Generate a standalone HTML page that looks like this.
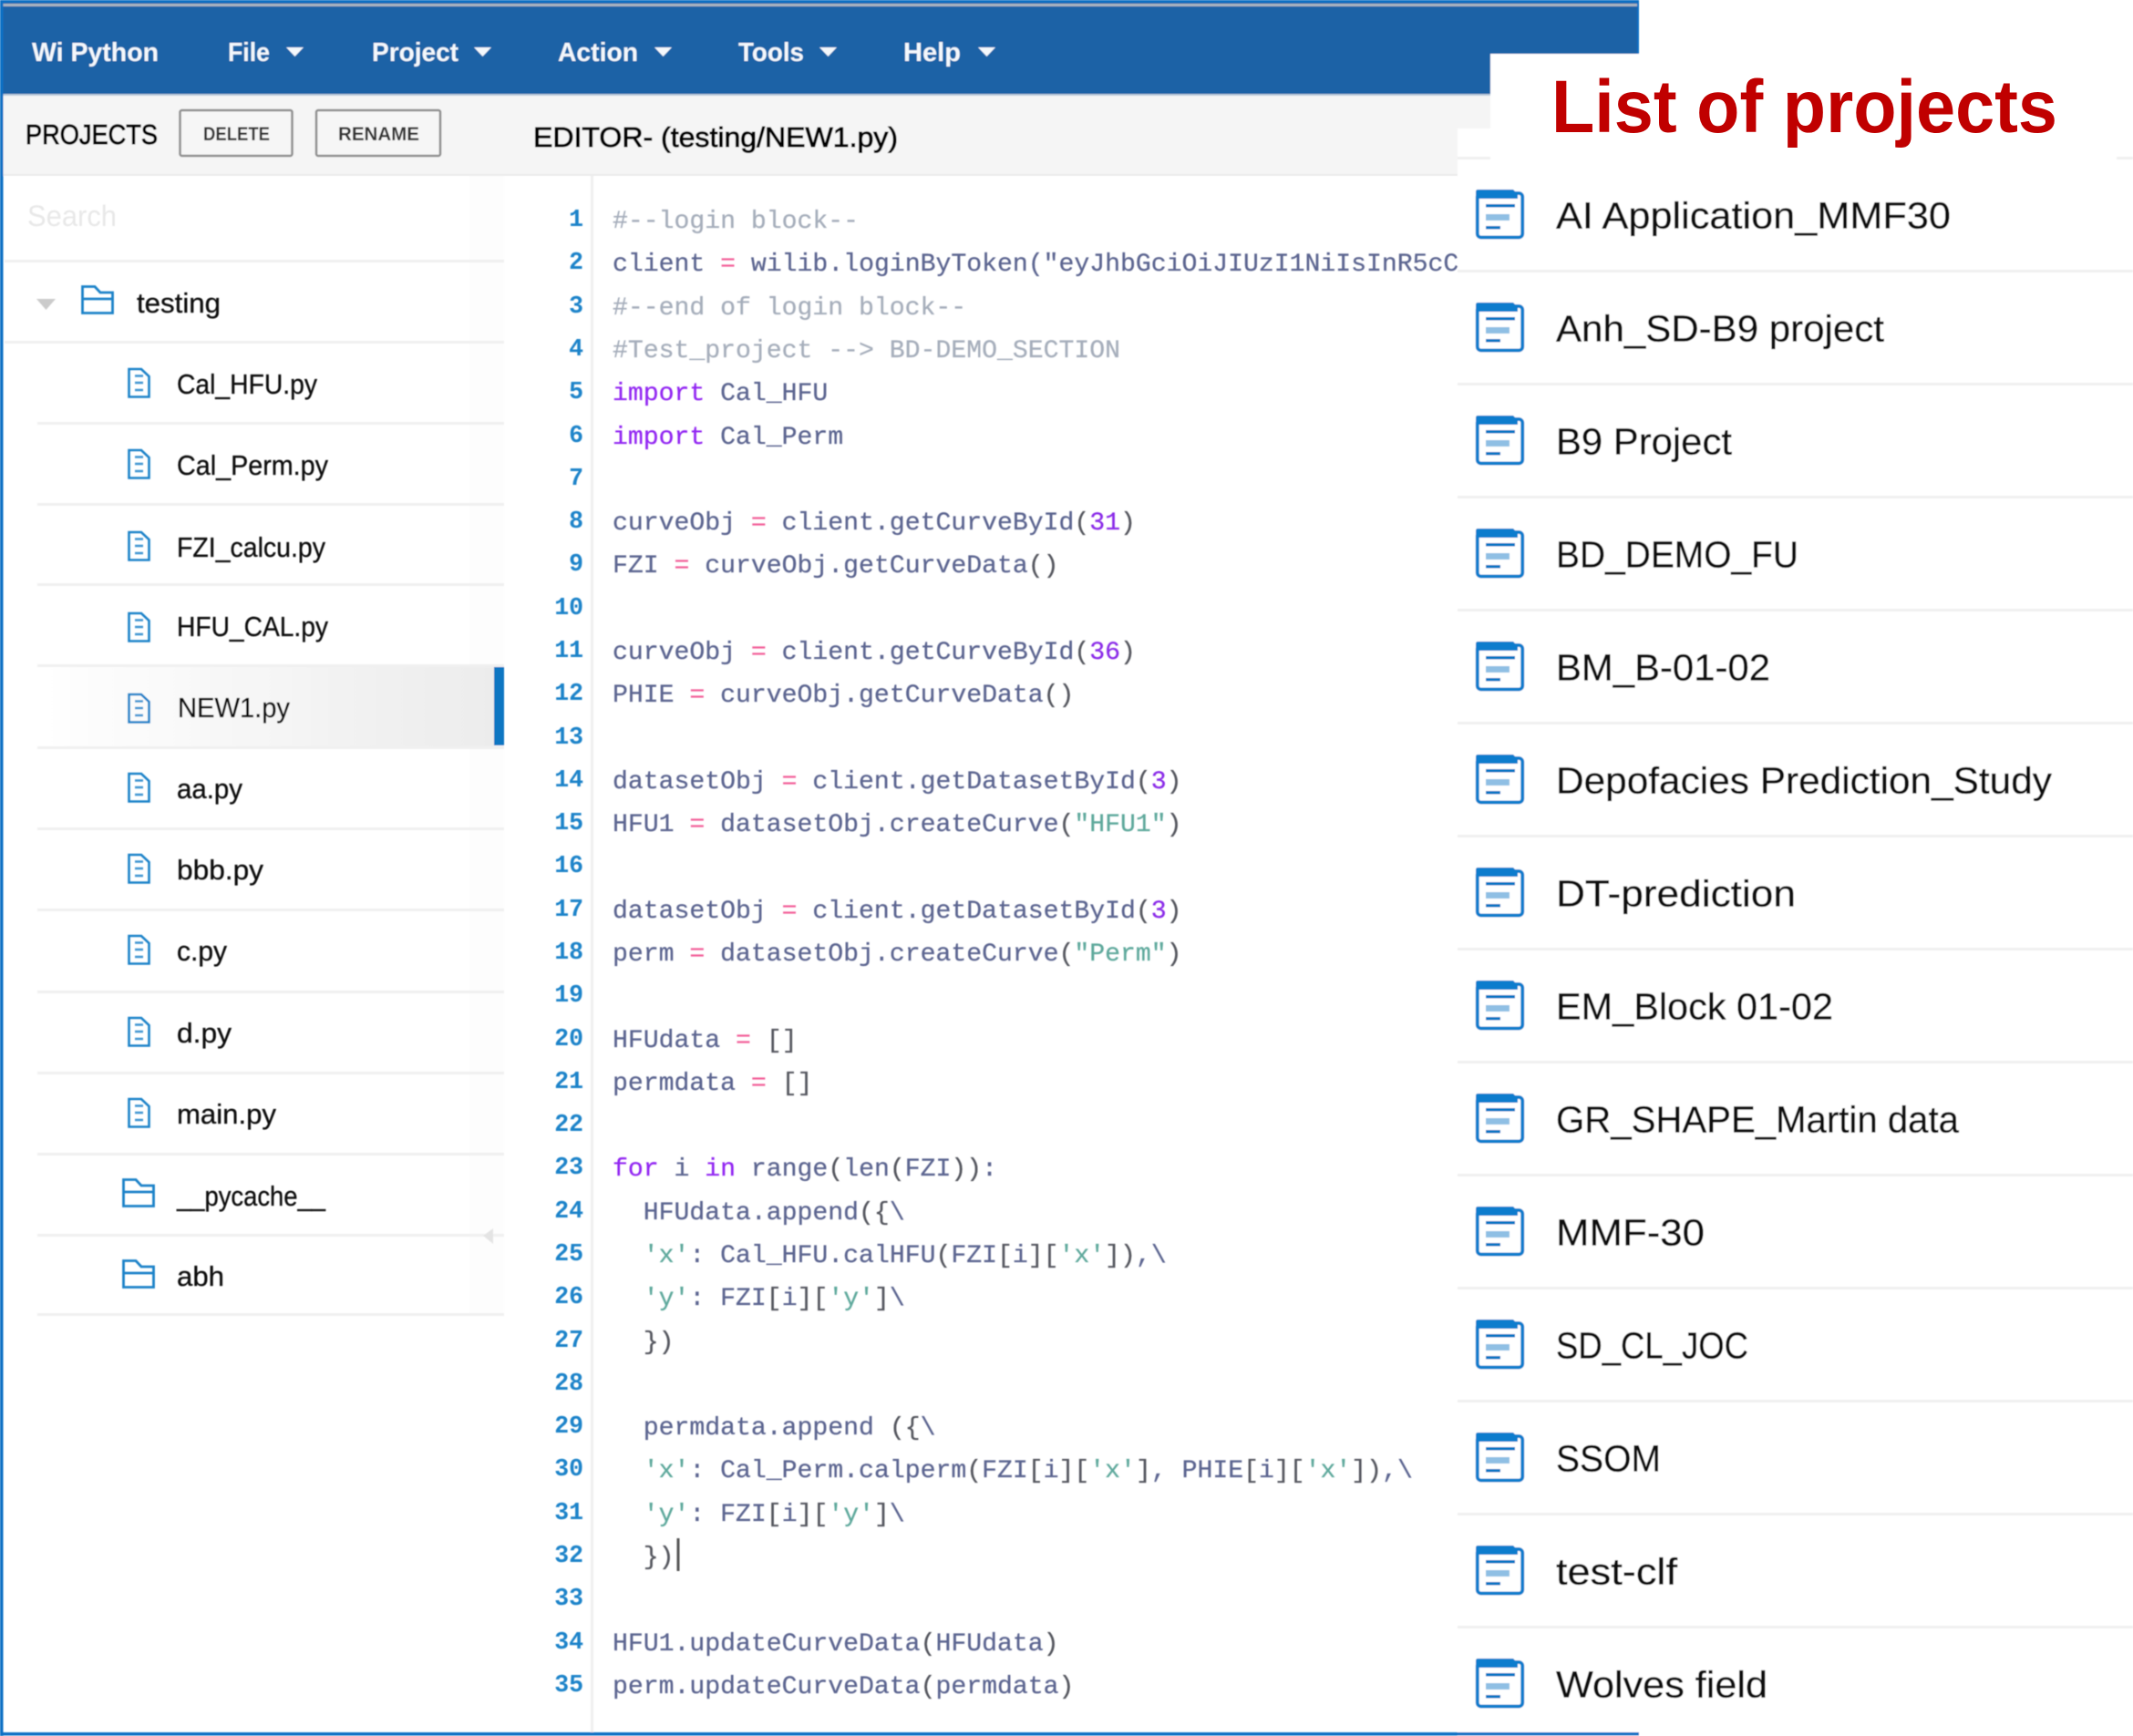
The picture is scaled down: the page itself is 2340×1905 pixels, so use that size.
<!DOCTYPE html>
<html lang="en">
<head>
<meta charset="utf-8">
<title>Wi Python</title>
<style>
html,body{margin:0;padding:0;background:#fff;width:2340px;height:1905px;overflow:hidden}
svg{display:block;position:absolute;left:0;top:0}
text{white-space:pre}
.sans{font-family:"Liberation Sans",sans-serif}
.nav{font-family:"Liberation Sans",sans-serif;font-weight:700;font-size:29px;fill:#f4f8fc}
.hd{font-family:"Liberation Sans",sans-serif;font-size:31px;fill:#000;stroke:#000;stroke-width:.9px}
.btn{font-family:"Liberation Sans",sans-serif;font-weight:700;font-size:21px;fill:#333}
.it{font-family:"Liberation Sans",sans-serif;font-size:31px;fill:#111;stroke:#111;stroke-width:.3px}
.pr{font-family:"Liberation Sans",sans-serif;font-size:41px;fill:#111;stroke:#111;stroke-width:.3px}
.ln{font-family:"Liberation Mono",monospace;font-weight:700;font-size:26.5px;fill:#1f83c9;text-anchor:end}
.c{font-family:"Liberation Mono",monospace;font-size:28.13px;fill:#5c6590;stroke:#5c6590;stroke-width:.25px}
.m{fill:#a6aebb;stroke:#a6aebb}
.k{fill:#9226f2;stroke:#9226f2}
.o{fill:#f2609a;stroke:#f2609a}
.n{fill:#8a2be8;stroke:#8a2be8}
.s{fill:#5fa99c;stroke:#5fa99c}
.b{fill:#55575e;stroke:#55575e}
</style>
</head>
<body>
<svg width="2340" height="1905" viewBox="0 0 2340 1905" xmlns="http://www.w3.org/2000/svg">
<defs>
<filter id="bl" x="0" y="0" width="100%" height="100%"><feGaussianBlur stdDeviation="0.55"/></filter>
<linearGradient id="act" x1="0" x2="1" y1="0" y2="0"><stop offset="0" stop-color="#fff"/><stop offset="1" stop-color="#ececec"/></linearGradient>
<g id="file" fill="none" stroke="#1f83c9"><path d="M1.5 2H15L23.5 10V32.5H1.5Z" stroke-width="2.6"/><path d="M8 9.5H17M8 17H17M8 25H17" stroke-width="2.4" opacity=".85"/></g>
<g id="fold" fill="none" stroke="#1f83c9" stroke-width="2.8"><path d="M1.5 1.5H15L21 8H34.5V30.5H1.5Z"/><path d="M1.5 15H34.5"/></g>
<g id="proj"><rect x="1.75" y="4" width="49.5" height="48.5" rx="4" fill="#fff" stroke="#0f7bcc" stroke-width="3.8"/><path d="M0 10V2.500Q0 0 2.500 0H41L46 5V10Z" fill="#0c7ccd"/><rect x="11" y="16" width="32" height="3.5" fill="#0f76c4"/><rect x="11" y="27" width="26" height="7" fill="#8fbfe4"/><rect x="11" y="40" width="16" height="3.5" fill="#0f76c4"/></g>
</defs>

<g filter="url(#bl)">
<!-- app chrome -->
<rect x="0" y="0" width="1798" height="104" fill="#1a62a6"/>
<rect x="0" y="0" width="1798" height="3" fill="#0a70c4"/>
<rect x="3" y="4" width="1794" height="3" fill="#a9b4c1"/>
<rect x="3" y="103" width="1794" height="2" fill="#b9c9d9"/>
<rect x="3" y="105" width="1794" height="87" fill="#f5f5f5"/>
<rect x="3" y="191" width="1794" height="2" fill="#ebebeb"/>
<rect x="0" y="0" width="3.5" height="1905" fill="#0a70c4"/>
<rect x="1796" y="0" width="2" height="104" fill="#0a70c4"/>

<!-- nav -->
<text class="nav" x="35" y="67" textLength="139" lengthAdjust="spacingAndGlyphs">Wi Python</text>
<text class="nav" x="250" y="67" textLength="46" lengthAdjust="spacingAndGlyphs">File</text>
<path d="M314 52H333L323.500 62Z" fill="#f4f8fc"/>
<text class="nav" x="408" y="67" textLength="95" lengthAdjust="spacingAndGlyphs">Project</text>
<path d="M520 52H539L529.500 62Z" fill="#f4f8fc"/>
<text class="nav" x="612" y="67" textLength="88" lengthAdjust="spacingAndGlyphs">Action</text>
<path d="M718 52H737L727.500 62Z" fill="#f4f8fc"/>
<text class="nav" x="810" y="67" textLength="72" lengthAdjust="spacingAndGlyphs">Tools</text>
<path d="M899 52H918L908.500 62Z" fill="#f4f8fc"/>
<text class="nav" x="991" y="67" textLength="63" lengthAdjust="spacingAndGlyphs">Help</text>
<path d="M1073 52H1092L1082.500 62Z" fill="#f4f8fc"/>

<!-- toolbar -->
<text class="hd" x="28" y="158" textLength="145" lengthAdjust="spacingAndGlyphs">PROJECTS</text>
<rect x="197.500" y="121" width="123" height="50" rx="2" fill="#f6f6f6" stroke="#8f8f8f" stroke-width="2.5"/>
<text class="btn" x="223" y="154" textLength="73" lengthAdjust="spacingAndGlyphs">DELETE</text>
<rect x="347" y="121" width="136" height="50" rx="2" fill="#f6f6f6" stroke="#8f8f8f" stroke-width="2.5"/>
<text class="btn" x="371" y="154" textLength="89" lengthAdjust="spacingAndGlyphs">RENAME</text>
<text class="hd" x="585" y="161" textLength="400" lengthAdjust="spacingAndGlyphs">EDITOR- (testing/NEW1.py)</text>

<!-- sidebar -->
<text class="sans" x="30" y="248" font-size="32" fill="#e8e8e8" textLength="98" lengthAdjust="spacingAndGlyphs">Search</text>
<rect x="515" y="193" width="38" height="1250" fill="#fdfdfd"/>
<rect x="41" y="732" width="501" height="87" fill="url(#act)"/>
<rect x="542" y="732" width="11" height="86" fill="#0f76c2"/>
<g fill="#f0f0f0">
<rect x="5" y="285" width="548" height="3"/>
<rect x="5" y="374" width="548" height="3"/>
<rect x="41" y="463" width="512" height="3"/>
<rect x="41" y="552" width="512" height="3"/>
<rect x="41" y="640" width="512" height="3"/>
<rect x="41" y="729" width="512" height="3"/>
<rect x="41" y="819" width="512" height="3"/>
<rect x="41" y="908" width="512" height="3"/>
<rect x="41" y="997" width="512" height="3"/>
<rect x="41" y="1087" width="512" height="3"/>
<rect x="41" y="1176" width="512" height="3"/>
<rect x="41" y="1265" width="512" height="3"/>
<rect x="41" y="1354" width="512" height="3"/>
<rect x="41" y="1441" width="512" height="3"/>
</g>
<path d="M530 1356L541 1348V1365Z" fill="#e4e4e4"/>

<path d="M40 328H61L50.500 340Z" fill="#cbcbcb"/>
<use href="#fold" x="89" y="313"/>
<text class="it" x="150" y="343" textLength="92" lengthAdjust="spacingAndGlyphs">testing</text>

<use href="#file" x="140" y="403"/><text class="it" x="194" y="432" textLength="154" lengthAdjust="spacingAndGlyphs">Cal_HFU.py</text>
<use href="#file" x="140" y="492"/><text class="it" x="194" y="521" textLength="166" lengthAdjust="spacingAndGlyphs">Cal_Perm.py</text>
<use href="#file" x="140" y="582"/><text class="it" x="194" y="611" textLength="163" lengthAdjust="spacingAndGlyphs">FZI_calcu.py</text>
<use href="#file" x="140" y="671"/><text class="it" x="194" y="698" textLength="166" lengthAdjust="spacingAndGlyphs">HFU_CAL.py</text>
<use href="#file" x="140" y="760"/><text class="it" x="195" y="787" textLength="123" lengthAdjust="spacingAndGlyphs">NEW1.py</text>
<use href="#file" x="140" y="847"/><text class="it" x="194" y="876" textLength="72" lengthAdjust="spacingAndGlyphs">aa.py</text>
<use href="#file" x="140" y="936"/><text class="it" x="194" y="965" textLength="95" lengthAdjust="spacingAndGlyphs">bbb.py</text>
<use href="#file" x="140" y="1025"/><text class="it" x="194" y="1054" textLength="55" lengthAdjust="spacingAndGlyphs">c.py</text>
<use href="#file" x="140" y="1115"/><text class="it" x="194" y="1144" textLength="60" lengthAdjust="spacingAndGlyphs">d.py</text>
<use href="#file" x="140" y="1204"/><text class="it" x="194" y="1233" textLength="109" lengthAdjust="spacingAndGlyphs">main.py</text>
<use href="#fold" x="134" y="1293"/><text class="it" x="194" y="1323" textLength="163" lengthAdjust="spacingAndGlyphs">__pycache__</text>
<use href="#fold" x="134" y="1382"/><text class="it" x="194" y="1411" textLength="52" lengthAdjust="spacingAndGlyphs">abh</text>

<!-- gutter -->
<rect x="648" y="193" width="3" height="1708" fill="#efefef"/>

<text class="ln" x="640" y="248">1</text>
<text class="ln" x="640" y="295">2</text>
<text class="ln" x="640" y="343">3</text>
<text class="ln" x="640" y="390">4</text>
<text class="ln" x="640" y="437">5</text>
<text class="ln" x="640" y="485">6</text>
<text class="ln" x="640" y="532">7</text>
<text class="ln" x="640" y="579">8</text>
<text class="ln" x="640" y="626">9</text>
<text class="ln" x="640" y="674">10</text>
<text class="ln" x="640" y="721">11</text>
<text class="ln" x="640" y="768">12</text>
<text class="ln" x="640" y="816">13</text>
<text class="ln" x="640" y="863">14</text>
<text class="ln" x="640" y="910">15</text>
<text class="ln" x="640" y="957">16</text>
<text class="ln" x="640" y="1005">17</text>
<text class="ln" x="640" y="1052">18</text>
<text class="ln" x="640" y="1099">19</text>
<text class="ln" x="640" y="1147">20</text>
<text class="ln" x="640" y="1194">21</text>
<text class="ln" x="640" y="1241">22</text>
<text class="ln" x="640" y="1288">23</text>
<text class="ln" x="640" y="1336">24</text>
<text class="ln" x="640" y="1383">25</text>
<text class="ln" x="640" y="1430">26</text>
<text class="ln" x="640" y="1478">27</text>
<text class="ln" x="640" y="1525">28</text>
<text class="ln" x="640" y="1572">29</text>
<text class="ln" x="640" y="1619">30</text>
<text class="ln" x="640" y="1667">31</text>
<text class="ln" x="640" y="1714">32</text>
<text class="ln" x="640" y="1761">33</text>
<text class="ln" x="640" y="1809">34</text>
<text class="ln" x="640" y="1856">35</text>

<!-- code -->
<text class="c m" x="672" y="250">#--login block--</text>
<text class="c" x="672" y="297">client <tspan class="o">=</tspan> wilib.loginByToken(&quot;eyJhbGciOiJIUzI1NiIsInR5cCI6IkpXVCJ9</text>
<text class="c m" x="672" y="345">#--end of login block--</text>
<text class="c m" x="672" y="392">#Test_project --&gt; BD-DEMO_SECTION</text>
<text class="c" x="672" y="439"><tspan class="k">import</tspan> Cal_HFU</text>
<text class="c" x="672" y="487"><tspan class="k">import</tspan> Cal_Perm</text>
<text class="c" x="672" y="581">curveObj <tspan class="o">=</tspan> client.getCurveById<tspan class="b">(</tspan><tspan class="n">31</tspan><tspan class="b">)</tspan></text>
<text class="c" x="672" y="628">FZI <tspan class="o">=</tspan> curveObj.getCurveData<tspan class="b">()</tspan></text>
<text class="c" x="672" y="723">curveObj <tspan class="o">=</tspan> client.getCurveById<tspan class="b">(</tspan><tspan class="n">36</tspan><tspan class="b">)</tspan></text>
<text class="c" x="672" y="770">PHIE <tspan class="o">=</tspan> curveObj.getCurveData<tspan class="b">()</tspan></text>
<text class="c" x="672" y="865">datasetObj <tspan class="o">=</tspan> client.getDatasetById<tspan class="b">(</tspan><tspan class="n">3</tspan><tspan class="b">)</tspan></text>
<text class="c" x="672" y="912">HFU1 <tspan class="o">=</tspan> datasetObj.createCurve<tspan class="b">(</tspan><tspan class="s">&quot;HFU1&quot;</tspan><tspan class="b">)</tspan></text>
<text class="c" x="672" y="1007">datasetObj <tspan class="o">=</tspan> client.getDatasetById<tspan class="b">(</tspan><tspan class="n">3</tspan><tspan class="b">)</tspan></text>
<text class="c" x="672" y="1054">perm <tspan class="o">=</tspan> datasetObj.createCurve<tspan class="b">(</tspan><tspan class="s">&quot;Perm&quot;</tspan><tspan class="b">)</tspan></text>
<text class="c" x="672" y="1149">HFUdata <tspan class="o">=</tspan> <tspan class="b">[]</tspan></text>
<text class="c" x="672" y="1196">permdata <tspan class="o">=</tspan> <tspan class="b">[]</tspan></text>
<text class="c" x="672" y="1290"><tspan class="k">for</tspan> i <tspan class="k">in</tspan> range<tspan class="b">(</tspan>len<tspan class="b">(</tspan>FZI<tspan class="b">))</tspan>:</text>
<text class="c" x="672" y="1338">  HFUdata.append<tspan class="b">({</tspan>\</text>
<text class="c" x="672" y="1385">  <tspan class="s">'x'</tspan>: Cal_HFU.calHFU<tspan class="b">(</tspan>FZI<tspan class="b">[</tspan>i<tspan class="b">][</tspan><tspan class="s">'x'</tspan><tspan class="b">])</tspan>,\</text>
<text class="c" x="672" y="1432">  <tspan class="s">'y'</tspan>: FZI<tspan class="b">[</tspan>i<tspan class="b">][</tspan><tspan class="s">'y'</tspan><tspan class="b">]</tspan>\</text>
<text class="c" x="672" y="1480">  <tspan class="b">})</tspan></text>
<text class="c" x="672" y="1574">  permdata.append <tspan class="b">({</tspan>\</text>
<text class="c" x="672" y="1621">  <tspan class="s">'x'</tspan>: Cal_Perm.calperm<tspan class="b">(</tspan>FZI<tspan class="b">[</tspan>i<tspan class="b">][</tspan><tspan class="s">'x'</tspan><tspan class="b">]</tspan>, PHIE<tspan class="b">[</tspan>i<tspan class="b">][</tspan><tspan class="s">'x'</tspan><tspan class="b">])</tspan>,\</text>
<text class="c" x="672" y="1669">  <tspan class="s">'y'</tspan>: FZI<tspan class="b">[</tspan>i<tspan class="b">][</tspan><tspan class="s">'y'</tspan><tspan class="b">]</tspan>\</text>
<text class="c" x="672" y="1716">  <tspan class="b">})</tspan></text>
<rect x="742.500" y="1688" width="3" height="36" fill="#555"/>
<text class="c" x="672" y="1811">HFU1.updateCurveData<tspan class="b">(</tspan>HFUdata<tspan class="b">)</tspan></text>
<text class="c" x="672" y="1858">perm.updateCurveData<tspan class="b">(</tspan>permdata<tspan class="b">)</tspan></text>

<!-- right overlay -->
<rect x="1635" y="59" width="705" height="85" fill="#fff"/>
<rect x="1599" y="141" width="741" height="1764" fill="#fff"/>
<rect x="1599" y="172" width="36" height="3" fill="#f0f0f0"/>
<rect x="2322" y="172" width="18" height="3" fill="#f0f0f0"/>

<!-- bottom border -->
<rect x="0" y="1901" width="1798" height="3.500" fill="#0a70c4"/>

<!-- project list -->
<g fill="#f0f0f0">
<rect x="1599" y="296" width="741" height="3"/>
<rect x="1599" y="420" width="741" height="3"/>
<rect x="1599" y="544" width="741" height="3"/>
<rect x="1599" y="668" width="741" height="3"/>
<rect x="1599" y="792" width="741" height="3"/>
<rect x="1599" y="916" width="741" height="3"/>
<rect x="1599" y="1040" width="741" height="3"/>
<rect x="1599" y="1164" width="741" height="3"/>
<rect x="1599" y="1288" width="741" height="3"/>
<rect x="1599" y="1412" width="741" height="3"/>
<rect x="1599" y="1536" width="741" height="3"/>
<rect x="1599" y="1660" width="741" height="3"/>
<rect x="1599" y="1784" width="741" height="3"/>
</g>
<use href="#proj" x="1619" y="208"/><text class="pr" x="1707" y="250.500" textLength="433" lengthAdjust="spacingAndGlyphs">AI Application_MMF30</text>
<use href="#proj" x="1619" y="332"/><text class="pr" x="1707" y="374.500" textLength="360" lengthAdjust="spacingAndGlyphs">Anh_SD-B9 project</text>
<use href="#proj" x="1619" y="456"/><text class="pr" x="1707" y="498.500" textLength="193" lengthAdjust="spacingAndGlyphs">B9 Project</text>
<use href="#proj" x="1619" y="580"/><text class="pr" x="1707" y="622.500" textLength="266" lengthAdjust="spacingAndGlyphs">BD_DEMO_FU</text>
<use href="#proj" x="1619" y="704"/><text class="pr" x="1707" y="746.500" textLength="235" lengthAdjust="spacingAndGlyphs">BM_B-01-02</text>
<use href="#proj" x="1619" y="828"/><text class="pr" x="1707" y="870.500" textLength="544" lengthAdjust="spacingAndGlyphs">Depofacies Prediction_Study</text>
<use href="#proj" x="1619" y="952"/><text class="pr" x="1707" y="994.500" textLength="263" lengthAdjust="spacingAndGlyphs">DT-prediction</text>
<use href="#proj" x="1619" y="1076"/><text class="pr" x="1707" y="1118.500" textLength="304" lengthAdjust="spacingAndGlyphs">EM_Block 01-02</text>
<use href="#proj" x="1619" y="1200"/><text class="pr" x="1707" y="1242.500" textLength="442" lengthAdjust="spacingAndGlyphs">GR_SHAPE_Martin data</text>
<use href="#proj" x="1619" y="1324"/><text class="pr" x="1707" y="1366.500" textLength="163" lengthAdjust="spacingAndGlyphs">MMF-30</text>
<use href="#proj" x="1619" y="1448"/><text class="pr" x="1707" y="1490.500" textLength="211" lengthAdjust="spacingAndGlyphs">SD_CL_JOC</text>
<use href="#proj" x="1619" y="1572"/><text class="pr" x="1707" y="1614.500" textLength="115" lengthAdjust="spacingAndGlyphs">SSOM</text>
<use href="#proj" x="1619" y="1696"/><text class="pr" x="1707" y="1738.500" textLength="133" lengthAdjust="spacingAndGlyphs">test-clf</text>
<use href="#proj" x="1619" y="1820"/><text class="pr" x="1707" y="1862.500" textLength="232" lengthAdjust="spacingAndGlyphs">Wolves field</text>
</g>

<text class="sans" x="1702" y="145" font-size="82" font-weight="700" fill="#c00000" textLength="555" lengthAdjust="spacingAndGlyphs">List of projects</text>
</svg>
</body>
</html>
